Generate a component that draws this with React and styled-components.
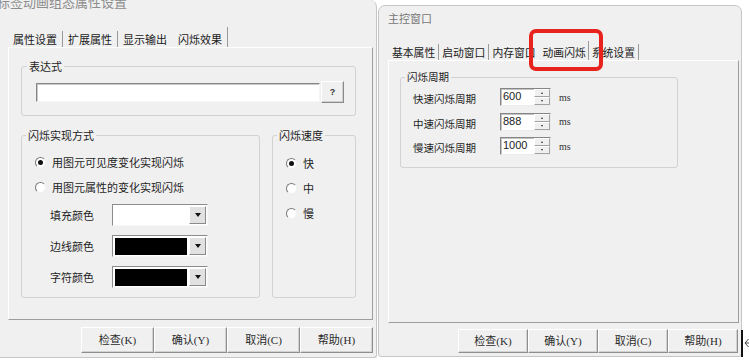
import React from "react";
import styled, { createGlobalStyle } from "styled-components";

const GlobalStyle = createGlobalStyle`
  html, body {
    margin: 0;
    padding: 0;
    background: #ffffff;
  }
  body {
    font-family: "Noto Sans CJK SC", "Noto Sans", sans-serif;
    color: #1e1e1e;
  }
`;

const Screen = styled.div`
  position: relative;
  width: 749px;
  height: 361px;
  overflow: hidden;
  display: flex;
  align-items: flex-start;
  background: #ffffff;
`;

const LeftDialog = styled.div`
  flex: none;
  box-sizing: border-box;
  width: 377px;
  height: 358px;
  display: flex;
  flex-direction: column;
  background: #f0f0f0;
  border-right: 1px solid #c6c6c6;
  border-bottom: 1px solid #c6c6c6;
  border-radius: 0 7px 3px 0;
`;

const RightDialog = styled.div`
  flex: none;
  box-sizing: border-box;
  width: 364px;
  height: 352px;
  margin: 5px 0 0 1px;
  display: flex;
  flex-direction: column;
  background: #f0f0f0;
  border: 1px solid #c6c6c6;
  border-radius: 7px 7px 3px 3px;
`;

const ClippedTitle = styled.div`
  margin: -5px 0 0 -3px;
  height: 13px;
  font-size: 13px;
  line-height: 13px;
  color: #8c8c8c;
  white-space: nowrap;
`;

const Caption = styled.div`
  padding: 6px 0 0 9px;
  font-size: 11px;
  line-height: 13px;
  color: #767676;
`;

const TabStrip = styled.div`
  flex: none;
  display: flex;
  align-items: flex-end;
  margin-top: ${(p) => p.$top}px;
  padding-left: ${(p) => p.$inset}px;
  font-size: ${(p) => p.$size}px;
`;

const Tab = styled.div`
  line-height: 12px;
  white-space: nowrap;
  color: #1a1a1a;
  padding: ${(p) => p.$pad};
  margin-left: ${(p) => (p.$active ? -2 : 0)}px;
  border-right: 1px solid ${(p) => (p.$sep || p.$active ? "#9a9a9a" : "transparent")};
`;

const Panel = styled.div`
  flex: none;
  box-sizing: border-box;
  width: ${(p) => p.$w}px;
  height: ${(p) => p.$h}px;
  margin-left: ${(p) => p.$left}px;
  padding: ${(p) => p.$pad};
  border: 1px solid;
  border-color: #ffffff #9d9d9d #9d9d9d #ffffff;
  display: flex;
  flex-direction: column;
`;

const Group = styled.fieldset`
  flex: none;
  box-sizing: border-box;
  min-width: 0;
  margin: 0;
  width: ${(p) => (p.$w ? `${p.$w}px` : "auto")};
  height: ${(p) => (p.$h ? `${p.$h}px` : "auto")};
  padding: ${(p) => p.$pad};
  border: 1px solid #d2d2d2;
  border-radius: 3px;
  font-size: ${(p) => p.$size}px;
`;

const Legend = styled.legend`
  padding: 0 2px;
  margin-left: ${(p) => p.$shift}px;
  line-height: 14px;
  color: #1e1e1e;
`;

const GroupRow = styled.div`
  display: flex;
  gap: 12px;
  margin-top: 12px;
`;

const ExprRow = styled.div`
  display: flex;
  align-items: center;
  gap: 1px;
`;

const ExprInput = styled.div`
  flex: 1;
  box-sizing: border-box;
  height: 19px;
  background: #ffffff;
  border: 1px solid;
  border-color: #868686 #f6f6f6 #f6f6f6 #868686;
  box-shadow: inset 1px 1px 0 #c9c9c9;
`;

const HelpButton = styled.button`
  flex: none;
  box-sizing: border-box;
  width: 23px;
  height: 22px;
  padding: 0;
  background: #f0f0f0;
  border: 1px solid;
  border-color: #ffffff #8a8a8a #8a8a8a #ffffff;
  box-shadow: inset -1px -1px 0 #d0d0d0;
  font-family: "Liberation Sans", sans-serif;
  font-size: 9px;
  font-weight: bold;
  color: #333;
`;

const RadioRow = styled.div`
  display: flex;
  align-items: center;
  gap: 6px;
  height: 16px;
  line-height: 16px;
  & + & {
    margin-top: 9px;
  }
`;

const Radio = styled.span`
  flex: none;
  box-sizing: border-box;
  width: 11px;
  height: 11px;
  border-radius: 50%;
  border: 1px solid;
  border-color: #7a7a7a #f2f2f2 #f2f2f2 #7a7a7a;
  background: #ffffff;
  display: flex;
  align-items: center;
  justify-content: center;
  &::after {
    content: "";
    width: 5px;
    height: 5px;
    border-radius: 50%;
    background: ${(p) => (p.$checked ? "#111" : "transparent")};
  }
`;

const ColorRows = styled.div`
  display: flex;
  flex-direction: column;
  gap: 9px;
  margin: 9px 0 0 15px;
`;

const ColorRow = styled.div`
  display: flex;
  align-items: center;
  height: 22px;
`;

const FieldLabel = styled.span`
  flex: none;
  width: ${(p) => p.$w}px;
  padding-top: ${(p) => p.$drop || 0}px;
  white-space: nowrap;
`;

const Combo = styled.div`
  flex: none;
  box-sizing: border-box;
  display: flex;
  gap: 2px;
  width: 96px;
  height: 22px;
  padding: 2px 1px 1px 2px;
  background: #ffffff;
  border: 1px solid;
  border-color: #8c8c8c #f6f6f6 #f6f6f6 #8c8c8c;
`;

const Swatch = styled.div`
  flex: 1;
  background: ${(p) => p.$color};
`;

const ComboButton = styled.div`
  flex: none;
  box-sizing: border-box;
  width: 17px;
  margin: -1px 0 0 0;
  background: #e1e1e1;
  border: 1px solid;
  border-color: #ffffff #8a8a8a #8a8a8a #ffffff;
  display: flex;
  align-items: center;
  justify-content: center;
  &::after {
    content: "";
    border-left: 3px solid transparent;
    border-right: 3px solid transparent;
    border-top: 4px solid #111;
  }
`;

const PeriodRow = styled.div`
  display: flex;
  align-items: center;
  height: 18px;
  & + & {
    margin-top: 6.5px;
  }
`;

const Spin = styled.div`
  flex: none;
  box-sizing: border-box;
  display: flex;
  width: 51px;
  height: 18px;
  background: #ffffff;
  border: 1px solid;
  border-color: #868686 #ececec #ececec #868686;
  box-shadow: inset 1px 1px 0 #c4c4c4;
`;

const SpinValue = styled.span`
  flex: 1;
  padding: 0 0 0 2px;
  font-family: "Liberation Sans", sans-serif;
  font-size: 11px;
  line-height: 15px;
  color: #222;
`;

const SpinButtons = styled.div`
  flex: none;
  width: 16px;
  display: flex;
  flex-direction: column;
`;

const SpinButton = styled.div`
  flex: 1;
  box-sizing: border-box;
  background: #f0f0f0;
  border: 1px solid;
  border-color: #ffffff #a2a2a2 #a2a2a2 #ffffff;
  display: flex;
  align-items: center;
  justify-content: center;
  &::after {
    content: "";
    border-left: 1.5px solid transparent;
    border-right: 1.5px solid transparent;
    ${(p) => (p.$up ? "border-bottom" : "border-top")}: 2px solid #333;
  }
`;

const Unit = styled.span`
  margin-left: 8px;
  font-family: "Liberation Serif", serif;
  font-size: 10px;
  color: #333;
`;

const ButtonRow = styled.div`
  display: flex;
  justify-content: flex-end;
  margin-top: ${(p) => p.$top}px;
  padding-right: 3px;
`;

const Button = styled.button`
  flex: none;
  box-sizing: border-box;
  width: ${(p) => p.$w}px;
  height: ${(p) => p.$h}px;
  margin: 0;
  padding: 0;
  background: #f0f0f0;
  border: 1px solid;
  border-color: #ffffff #8e8e8e #8e8e8e #ffffff;
  box-shadow: inset -1px -1px 0 #d2d2d2;
  font-family: "Liberation Serif", "Noto Sans CJK SC", serif;
  font-size: 11px;
  line-height: 1;
  color: #2a2a2a;
`;

const Highlight = styled.div`
  position: absolute;
  left: 529px;
  top: 29px;
  width: 74px;
  height: 42px;
  box-sizing: border-box;
  border: 4px solid #e8231e;
  border-radius: 7px;
`;

const Caret = styled.div`
  position: absolute;
  left: 741px;
  top: 330px;
  width: 2px;
  height: 27px;
  background: #111;
`;

const CursorArrow = styled.svg`
  position: absolute;
  left: 744px;
  top: 338px;
`;

const leftTabs = [
  { label: "属性设置", sep: true },
  { label: "扩展属性", sep: true },
  { label: "显示输出" },
  { label: "闪烁效果", active: true },
];

const rightTabs = [
  { label: "基本属性", sep: true },
  { label: "启动窗口", sep: true },
  { label: "内存窗口" },
  { label: "动画闪烁", active: true },
  { label: "系统设置", sep: true },
];

const buttons = ["检查(K)", "确认(Y)", "取消(C)", "帮助(H)"];

const TabBar = ({ tabs, pad, activePad, ...strip }) => (
  <TabStrip {...strip}>
    {tabs.map((t) => (
      <Tab key={t.label} $active={t.active} $sep={t.sep} $pad={t.active ? activePad : pad}>
        {t.label}
      </Tab>
    ))}
  </TabStrip>
);

const ColorField = ({ label, color }) => (
  <ColorRow>
    <FieldLabel $w={62}>{label}</FieldLabel>
    <Combo>
      <Swatch $color={color} />
      <ComboButton />
    </Combo>
  </ColorRow>
);

const PeriodField = ({ label, value }) => (
  <PeriodRow>
    <FieldLabel $w={87} $drop={3}>
      {label}
    </FieldLabel>
    <Spin>
      <SpinValue>{value}</SpinValue>
      <SpinButtons>
        <SpinButton $up />
        <SpinButton />
      </SpinButtons>
    </Spin>
    <Unit>ms</Unit>
  </PeriodRow>
);

const App = () => {
  return (
    <Screen>
      <GlobalStyle />
      <LeftDialog>
        <ClippedTitle>标签动画组态属性设置</ClippedTitle>
        <TabBar
          tabs={leftTabs}
          $top={19}
          $inset={8}
          $size={11}
          pad="2px 5px"
          activePad="6px 5px 2px 7px"
        />
        <Panel $w={365} $h={273} $left={8} $pad="11px 16px 0 12px">
          <Group $size={11} $pad="8px 11px 12px 14px">
            <Legend $shift={-9}>表达式</Legend>
            <ExprRow>
              <ExprInput />
              <HelpButton>?</HelpButton>
            </ExprRow>
          </Group>
          <GroupRow>
            <Group $size={11} $w={239} $h={170} $pad="12px 8px 0 13px">
              <Legend $shift={-9}>闪烁实现方式</Legend>
              <RadioRow>
                <Radio $checked />
                用图元可见度变化实现闪烁
              </RadioRow>
              <RadioRow>
                <Radio />
                用图元属性的变化实现闪烁
              </RadioRow>
              <ColorRows>
                <ColorField label="填充颜色" color="#ffffff" />
                <ColorField label="边线颜色" color="#000000" />
                <ColorField label="字符颜色" color="#000000" />
              </ColorRows>
            </Group>
            <Group $size={11} $w={84} $h={170} $pad="13px 8px 0 13px">
              <Legend $shift={-9}>闪烁速度</Legend>
              <RadioRow>
                <Radio $checked />快
              </RadioRow>
              <RadioRow>
                <Radio />中
              </RadioRow>
              <RadioRow>
                <Radio />慢
              </RadioRow>
            </Group>
          </GroupRow>
        </Panel>
        <ButtonRow $top={7}>
          {buttons.map((b) => (
            <Button key={b} $w={73} $h={26}>
              {b}
            </Button>
          ))}
        </ButtonRow>
      </LeftDialog>

      <RightDialog>
        <Caption>主控窗口</Caption>
        <TabBar
          tabs={rightTabs}
          $top={16}
          $inset={10}
          $size={10.8}
          pad="2px 3px"
          activePad="5px 2px 2px 5px"
        />
        <Panel $w={351} $h={263} $left={9} $pad="9px 0 0 11px">
          <Group $size={10.5} $w={278} $h={98} $pad="4px 8px 0 12px">
            <Legend $shift={-8}>闪烁周期</Legend>
            <PeriodField label="快速闪烁周期" value="600" />
            <PeriodField label="中速闪烁周期" value="888" />
            <PeriodField label="慢速闪烁周期" value="1000" />
          </Group>
        </Panel>
        <ButtonRow $top={6}>
          {buttons.map((b) => (
            <Button key={b} $w={70} $h={24}>
              {b}
            </Button>
          ))}
        </ButtonRow>
      </RightDialog>

      <Highlight />
      <Caret />
      <CursorArrow width="5" height="10" viewBox="0 0 5 10">
        <polyline points="4.5,1 1,5 4.5,9" fill="none" stroke="#444" strokeWidth="1" />
        <line x1="1" y1="5" x2="5" y2="5" stroke="#444" strokeWidth="1" />
      </CursorArrow>
    </Screen>
  );
};

export default App;
